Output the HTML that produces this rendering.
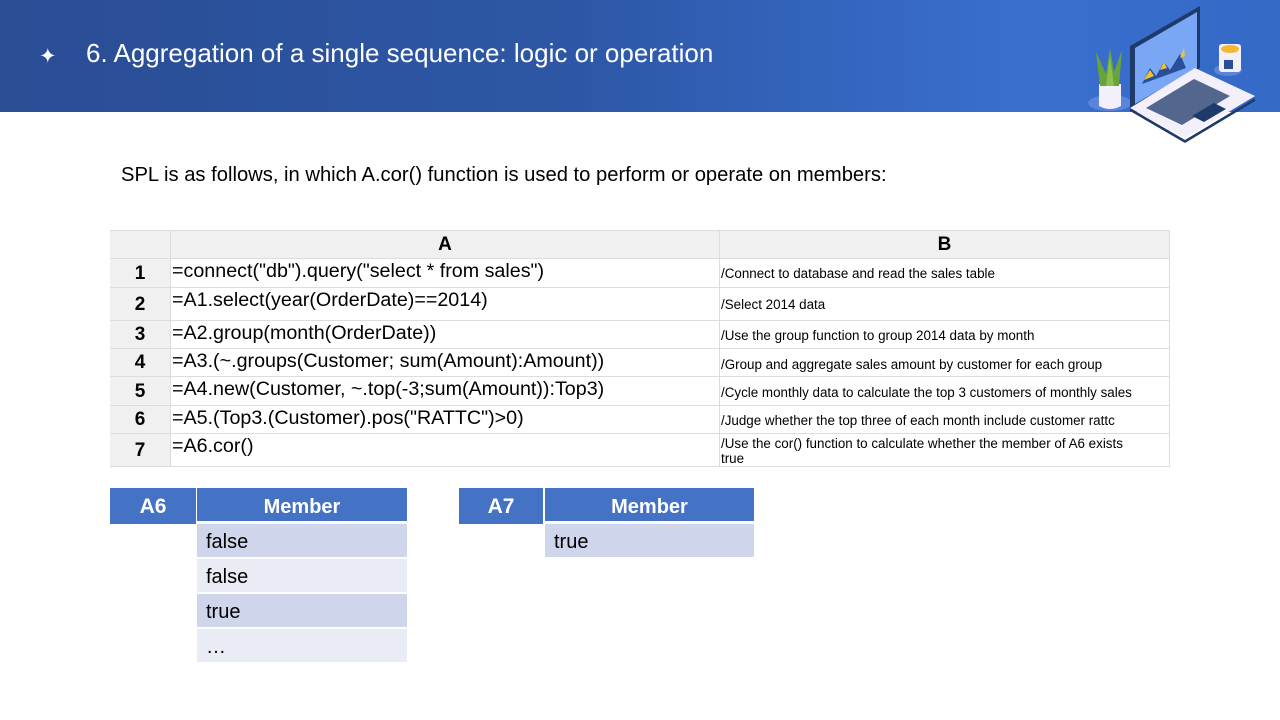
<!DOCTYPE html>
<html><head><meta charset="utf-8"><style>
*{margin:0;padding:0;box-sizing:border-box}
body{width:1280px;height:720px;background:#fff;position:relative;overflow:hidden;font-family:"Liberation Sans",sans-serif;color:#000}
.hdr{position:absolute;left:0;top:0;width:1280px;height:112px;background:linear-gradient(90deg,#2a4d94 0%,#2d57a6 45%,#3a6fcf 80%,#3569c6 100%)}
.ttl{position:absolute;left:86px;top:38px;color:#fff;font-size:26px;white-space:nowrap}
.star{position:absolute;left:39px;top:44px;color:#fff;font-size:21px}
.a{position:absolute;white-space:nowrap}
.cell{position:absolute;border-right:1px solid #dcdcdc;border-bottom:1px solid #dcdcdc;white-space:nowrap}
.num{font-weight:bold;font-size:19px;text-align:center}
.code{font-size:19.7px;padding-left:1px;padding-top:1px}
.cmt{font-size:13.4px;padding-left:1px;line-height:15px}
.bh{position:absolute;background:#4472c4;color:#fff;font-weight:bold;font-size:20px;text-align:center}
.br{position:absolute;font-size:20px;padding-left:9px}
</style></head><body>
<div class="hdr"></div>
<div class="star">✦</div>
<div class="ttl">6. Aggregation of a single sequence: logic or operation</div>
<svg class="a" style="left:1080px;top:0" width="200" height="150" viewBox="0 0 200 150">
<ellipse cx="30" cy="103" rx="22" ry="8" fill="#5b84dc"/>
<path d="M19 84h22v22q-11 6-22 0z" fill="#f4f0fb"/>
<path d="M20 86l-4-34 10 22 4-26 4 24 8-22-3 36z" fill="#6aa33a"/>
<path d="M26 86l4-30 4 30z" fill="#8cc04a"/>
<ellipse cx="148" cy="70" rx="14" ry="6" fill="#5b84dc"/>
<rect x="139" y="44" width="22" height="28" rx="3" fill="#f4f0fb"/>
<ellipse cx="150" cy="49" rx="9" ry="4" fill="#f2b830"/>
<rect x="144" y="60" width="9" height="9" fill="#2a4f9a"/>
<path d="M50 108l0-62 70-40 0 62z" fill="#1d3a6a"/>
<path d="M55 104l0-56 62-36 0 56z" fill="#7aa7f5"/>
<path d="M62 84l8-16 6 8 8-14 6 8 10-16 6 14z" fill="#2a4f9a"/>
<path d="M64 80l6-10 4 6zM80 70l4-8 3 6zM100 58l4-10 1 8z" fill="#f2c230"/>
<path d="M50 108l65-40 60 28-70 42z" fill="#f4f0fb"/>
<path d="M50 108l55 32 70-42 0 3-70 42-55-32z" fill="#1d3a6a"/>
<path d="M66 108l48-29 36 17-48 29z" fill="#1d3a6a" opacity=".75"/>
<path d="M112 116l22-13 12 6-22 13z" fill="#1d3a6a"/>
</svg>
<div class="a" style="left:121px;top:164px;font-size:20.2px">SPL is as follows, in which A.cor() function is used to perform or operate on members:</div>

<div class="a" style="left:110px;top:230px;width:1060px;height:238px;border-top:1px solid #dcdcdc;border-left:1px solid #dcdcdc"></div>
<div class="cell" style="left:110px;top:231px;width:61px;height:28px;background:#f0f0f0"></div>
<div class="cell num" style="left:171px;top:231px;width:549px;height:28px;background:#f0f0f0;line-height:28px">A</div>
<div class="cell num" style="left:720px;top:231px;width:450px;height:28px;background:#f0f0f0;line-height:28px">B</div>

<div class="cell num" style="left:110px;top:259px;width:61px;height:29px;background:#f0f0f0;line-height:29px">1</div>
<div class="cell code" style="left:171px;top:259px;width:549px;height:29px">=connect("db").query("select * from sales")</div>
<div class="cell cmt" style="left:720px;top:259px;width:450px;height:29px;padding-top:7px">/Connect to database and read the sales table</div>

<div class="cell num" style="left:110px;top:288px;width:61px;height:33px;background:#f0f0f0;line-height:33px">2</div>
<div class="cell code" style="left:171px;top:288px;width:549px;height:33px">=A1.select(year(OrderDate)==2014)</div>
<div class="cell cmt" style="left:720px;top:288px;width:450px;height:33px;padding-top:9px">/Select 2014 data</div>

<div class="cell num" style="left:110px;top:321px;width:61px;height:28px;background:#f0f0f0;line-height:28px">3</div>
<div class="cell code" style="left:171px;top:321px;width:549px;height:28px">=A2.group(month(OrderDate))</div>
<div class="cell cmt" style="left:720px;top:321px;width:450px;height:28px;padding-top:7px">/Use the group function to group 2014 data by month</div>

<div class="cell num" style="left:110px;top:349px;width:61px;height:28px;background:#f0f0f0;line-height:28px">4</div>
<div class="cell code" style="left:171px;top:349px;width:549px;height:28px">=A3.(~.groups(Customer; sum(Amount):Amount))</div>
<div class="cell cmt" style="left:720px;top:349px;width:450px;height:28px;padding-top:8px">/Group and aggregate sales amount by customer for each group</div>

<div class="cell num" style="left:110px;top:377px;width:61px;height:29px;background:#f0f0f0;line-height:29px">5</div>
<div class="cell code" style="left:171px;top:377px;width:549px;height:29px">=A4.new(Customer, ~.top(-3;sum(Amount)):Top3)</div>
<div class="cell cmt" style="left:720px;top:377px;width:450px;height:29px;padding-top:8px">/Cycle monthly data to calculate the top 3 customers of monthly sales</div>

<div class="cell num" style="left:110px;top:406px;width:61px;height:28px;background:#f0f0f0;line-height:28px">6</div>
<div class="cell code" style="left:171px;top:406px;width:549px;height:28px">=A5.(Top3.(Customer).pos("RATTC")&gt;0)</div>
<div class="cell cmt" style="left:720px;top:406px;width:450px;height:28px;padding-top:7px">/Judge whether the top three of each month include customer rattc</div>

<div class="cell num" style="left:110px;top:434px;width:61px;height:33px;background:#f0f0f0;line-height:33px">7</div>
<div class="cell code" style="left:171px;top:434px;width:549px;height:33px">=A6.cor()</div>
<div class="cell cmt" style="left:720px;top:434px;width:450px;height:33px;padding-top:2px">/Use the cor() function to calculate whether the member of A6 exists<br>true</div>

<div class="bh" style="left:110px;top:488px;width:86px;height:36px;line-height:38px;font-size:21px">A6</div>
<div class="bh" style="left:197px;top:488px;width:210px;height:33px;line-height:38px">Member</div>
<div class="br" style="left:197px;top:524px;width:210px;height:33px;line-height:36px;background:#cfd5ea">false</div>
<div class="br" style="left:197px;top:559px;width:210px;height:33px;line-height:36px;background:#e9ebf5">false</div>
<div class="br" style="left:197px;top:594px;width:210px;height:33px;line-height:36px;background:#cfd5ea">true</div>
<div class="br" style="left:197px;top:629px;width:210px;height:33px;line-height:36px;background:#e9ebf5">…</div>

<div class="bh" style="left:459px;top:488px;width:84px;height:36px;line-height:38px;font-size:21px">A7</div>
<div class="bh" style="left:545px;top:488px;width:209px;height:33px;line-height:38px">Member</div>
<div class="br" style="left:545px;top:524px;width:209px;height:33px;line-height:36px;background:#cfd5ea">true</div>
</body></html>
